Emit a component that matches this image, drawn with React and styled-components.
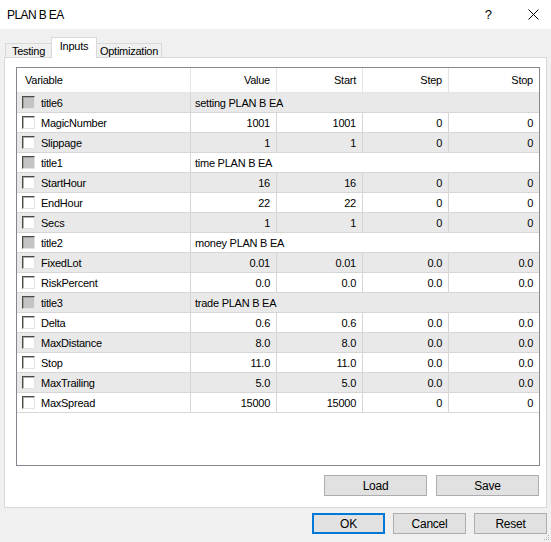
import React from 'react';
import styled, { createGlobalStyle } from 'styled-components';

const GlobalStyle = createGlobalStyle`
  html, body {
    margin: 0;
    padding: 0;
    background: #f0f0f0;
  }
`;

const Window = styled.div`
  position: relative;
  width: 551px;
  height: 542px;
  display: flex;
  flex-direction: column;
  background: #f0f0f0;
  font-family: "Liberation Sans", Arial, sans-serif;
  font-size: 11px;
  letter-spacing: -0.25px;
  color: #000;
  overflow: hidden;
`;

const TitleBar = styled.div`
  height: 29px;
  flex: none;
  display: flex;
  align-items: center;
  background: #fff;
  padding-left: 7px;
  font-size: 12px;
  letter-spacing: -0.6px;
`;

const TitleText = styled.div`
  flex: 1;
`;

const CaptionButton = styled.div`
  width: ${(p) => p.w}px;
  height: 29px;
  display: flex;
  align-items: center;
  justify-content: center;
  font-size: 13px;
`;

const TabStrip = styled.div`
  height: 28px;
  flex: none;
  display: flex;
  align-items: flex-end;
  padding-left: 5px;
`;

const Tab = styled.div`
  position: relative;
  box-sizing: border-box;
  width: ${(p) => p.w}px;
  height: ${(p) => (p.active ? 21 : 14)}px;
  margin-bottom: ${(p) => (p.active ? -1 : 0)}px;
  z-index: ${(p) => (p.active ? 2 : 1)};
  display: flex;
  align-items: ${(p) => (p.active ? 'flex-start' : 'center')};
  padding-top: ${(p) => (p.active ? 2 : 0)}px;
  justify-content: center;
  background: ${(p) => (p.active ? '#fff' : '#f0f0f0')};
  border: 1px solid #d9d9d9;
  border-bottom: none;
  margin-left: ${(p) => (p.first ? 0 : -1)}px;
  white-space: nowrap;
`;

const Panel = styled.div`
  box-sizing: border-box;
  margin: 0 4px;
  height: 451px;
  flex: none;
  background: #fff;
  border: 1px solid #d9d9d9;
  padding: 9px 6px 0 11px;
  display: flex;
  flex-direction: column;
`;

const List = styled.div`
  box-sizing: border-box;
  height: 399px;
  border: 1px solid #828790;
  background: #fff;
  display: flex;
  flex-direction: column;
`;

const columns = '174px 86px 86px 86px 90px';

const HeaderRow = styled.div`
  display: grid;
  grid-template-columns: ${columns};
  height: 25px;
  box-sizing: border-box;
  border-bottom: 1px solid #e5e5e5;
`;

const HeaderCell = styled.div`
  display: flex;
  align-items: center;
  justify-content: ${(p) => (p.left ? 'flex-start' : 'flex-end')};
  padding: ${(p) => (p.left ? '0 0 0 8px' : '0 6px 0 0')};
  border-right: 1px solid #e5e5e5;
  &:last-child {
    border-right: none;
  }
`;

const Row = styled.div`
  display: grid;
  grid-template-columns: ${columns};
  height: 20px;
  box-sizing: border-box;
  border-bottom: 1px solid #d6d6d6;
  background: ${(p) => (p.shaded ? '#e9e9e9' : '#fff')};
`;

const Cell = styled.div`
  display: flex;
  align-items: center;
  justify-content: flex-end;
  padding-right: 6px;
  border-right: 1px solid #d6d6d6;
  white-space: nowrap;
  &:last-child {
    border-right: none;
  }
`;

const NameCell = styled.div`
  display: flex;
  align-items: center;
  gap: 6px;
  padding-left: 5px;
  border-right: 1px solid #d6d6d6;
`;

const GroupCell = styled.div`
  grid-column: 2 / span 4;
  display: flex;
  align-items: center;
  padding-left: 4px;
`;

const Check = styled.span`
  box-sizing: border-box;
  width: 13px;
  height: 13px;
  flex: none;
  background: ${(p) => (p.group ? '#c4c4c4' : '#fff')};
  border: 1px solid;
  border-color: #4a4a4a #e3e3e3 #e3e3e3 #4a4a4a;
  box-shadow: inset 1px 1px 0 ${(p) => (p.group ? '#a0a0a0' : '#b0b0b0')};
`;

const ButtonRow = styled.div`
  display: flex;
  justify-content: flex-end;
  gap: ${(p) => p.gap}px;
  margin: ${(p) => p.m};
`;

const Button = styled.div`
  box-sizing: border-box;
  width: ${(p) => p.w}px;
  height: 21px;
  display: flex;
  align-items: center;
  justify-content: center;
  background: #e1e1e1;
  border: ${(p) => (p.primary ? '2px solid #0078d7' : '1px solid #adadad')};
  font-size: 12px;
`;

const Grip = styled.svg`
  position: absolute;
  right: 1px;
  bottom: 1px;
`;

const rows = [
  { name: 'title6', title: 'setting PLAN B EA' },
  { name: 'MagicNumber', v: ['1001', '1001', '0', '0'] },
  { name: 'Slippage', v: ['1', '1', '0', '0'] },
  { name: 'title1', title: 'time PLAN B EA' },
  { name: 'StartHour', v: ['16', '16', '0', '0'] },
  { name: 'EndHour', v: ['22', '22', '0', '0'] },
  { name: 'Secs', v: ['1', '1', '0', '0'] },
  { name: 'title2', title: 'money PLAN B EA' },
  { name: 'FixedLot', v: ['0.01', '0.01', '0.0', '0.0'] },
  { name: 'RiskPercent', v: ['0.0', '0.0', '0.0', '0.0'] },
  { name: 'title3', title: 'trade PLAN B EA' },
  { name: 'Delta', v: ['0.6', '0.6', '0.0', '0.0'] },
  { name: 'MaxDistance', v: ['8.0', '8.0', '0.0', '0.0'] },
  { name: 'Stop', v: ['11.0', '11.0', '0.0', '0.0'] },
  { name: 'MaxTrailing', v: ['5.0', '5.0', '0.0', '0.0'] },
  { name: 'MaxSpread', v: ['15000', '15000', '0', '0'] },
];

export default function App() {
  return (
    <Window>
      <GlobalStyle />
      <TitleBar>
        <TitleText>PLAN B EA</TitleText>
        <CaptionButton w={54}>?</CaptionButton>
        <CaptionButton w={36}>
          <svg width="11" height="11" viewBox="0 0 11 11">
            <path d="M0.5 0.5 L10.5 10.5 M10.5 0.5 L0.5 10.5" stroke="#000" strokeWidth="1" />
          </svg>
        </CaptionButton>
      </TitleBar>

      <TabStrip>
        <Tab first w={47}>Testing</Tab>
        <Tab active w={46}>Inputs</Tab>
        <Tab w={66}>Optimization</Tab>
      </TabStrip>

      <Panel>
        <List>
          <HeaderRow>
            <HeaderCell left>Variable</HeaderCell>
            <HeaderCell>Value</HeaderCell>
            <HeaderCell>Start</HeaderCell>
            <HeaderCell>Step</HeaderCell>
            <HeaderCell>Stop</HeaderCell>
          </HeaderRow>
          {rows.map((r, i) => (
            <Row key={r.name} shaded={i % 2 === 0}>
              <NameCell>
                <Check group={!!r.title} />
                {r.name}
              </NameCell>
              {r.title ? (
                <GroupCell>{r.title}</GroupCell>
              ) : (
                r.v.map((val, j) => <Cell key={j}>{val}</Cell>)
              )}
            </Row>
          ))}
        </List>
        <ButtonRow gap={9} m="9px 1px 0 0">
          <Button w={103}>Load</Button>
          <Button w={103}>Save</Button>
        </ButtonRow>
      </Panel>

      <ButtonRow gap={8} m="5px 4px 0 0">
        <Button primary w={73}>OK</Button>
        <Button w={73}>Cancel</Button>
        <Button w={73}>Reset</Button>
      </ButtonRow>

      <Grip width="6" height="6" viewBox="0 0 6 6">
        <rect x="4" y="0" width="1" height="1" fill="#b0b0b0" />
        <rect x="2" y="2" width="1" height="1" fill="#b0b0b0" />
        <rect x="4" y="2" width="1" height="1" fill="#b0b0b0" />
        <rect x="0" y="4" width="1" height="1" fill="#b0b0b0" />
        <rect x="2" y="4" width="1" height="1" fill="#b0b0b0" />
        <rect x="4" y="4" width="1" height="1" fill="#b0b0b0" />
      </Grip>
    </Window>
  );
}
